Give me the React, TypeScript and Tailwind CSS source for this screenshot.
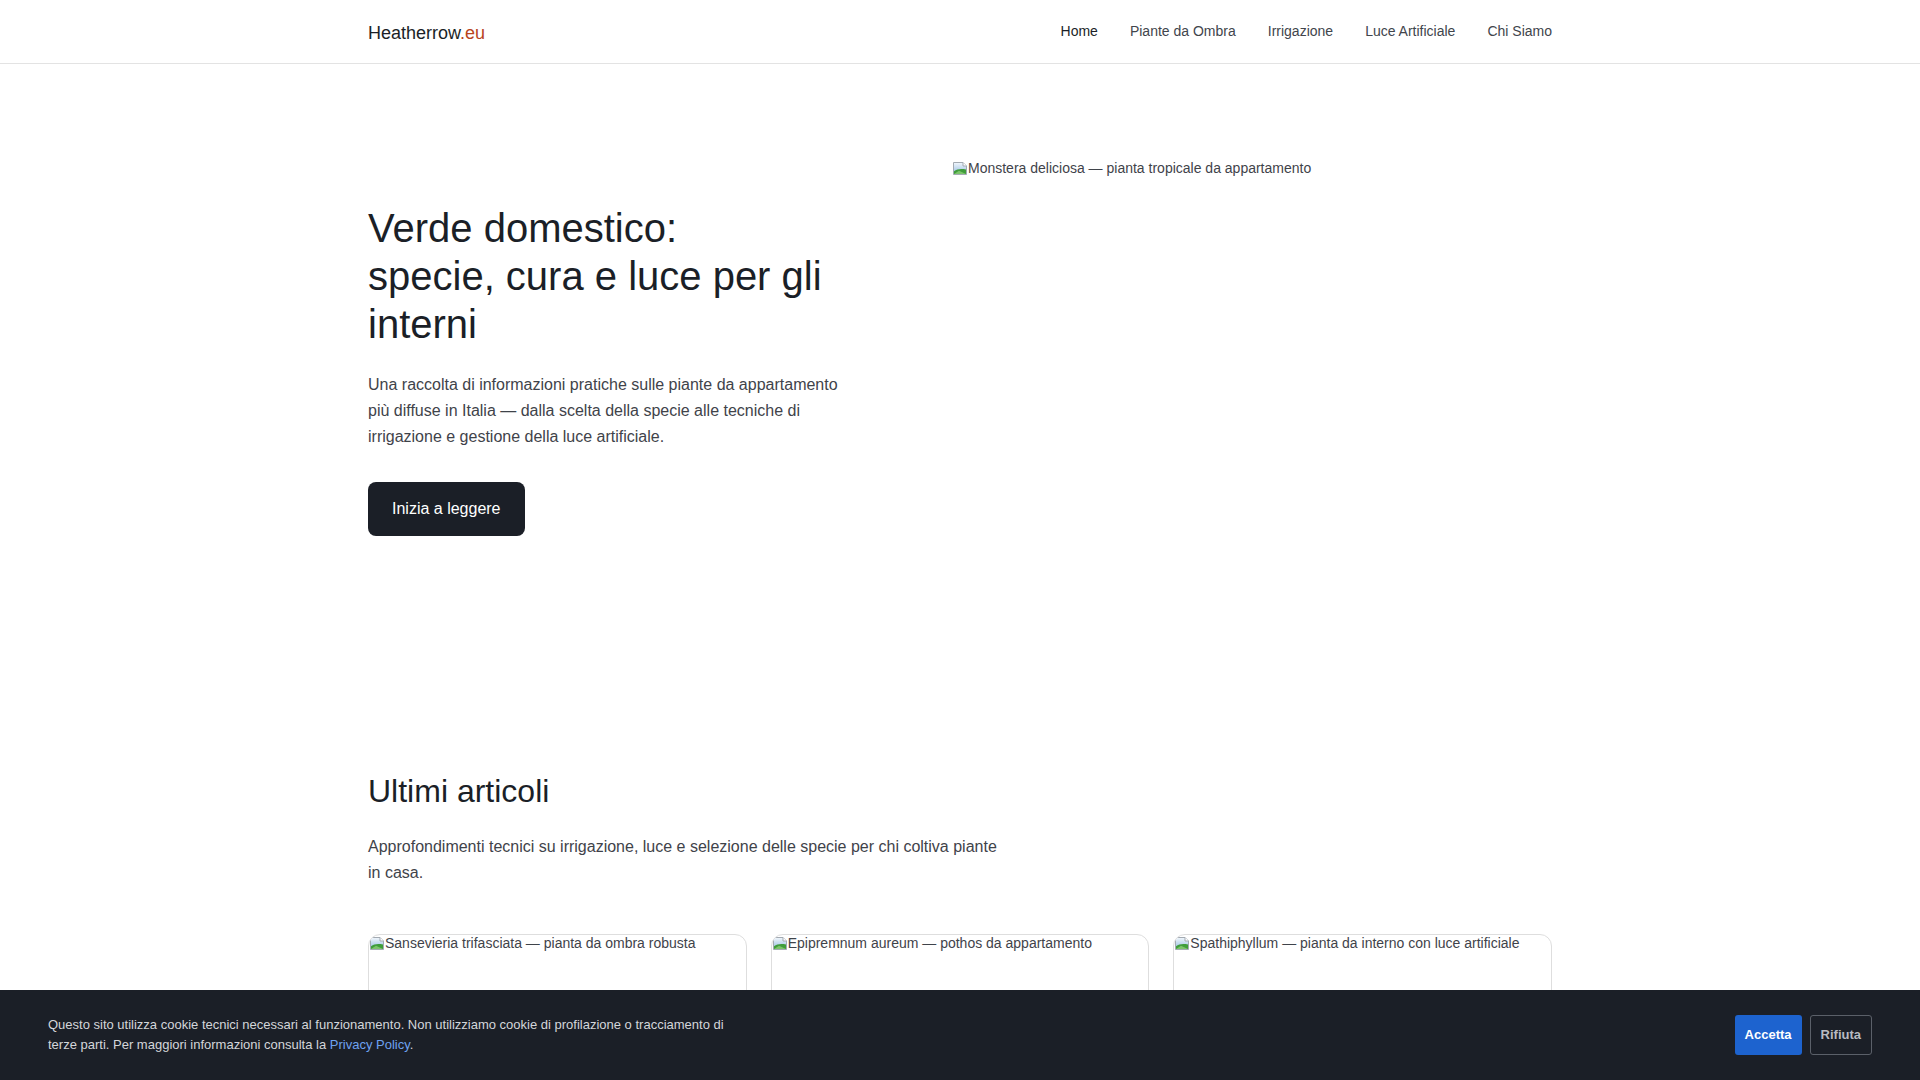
import React from "react";

// Small "missing picture" glyph shown in front of each image caption
function PictureGlyph() {
  return (
    <svg width="16" height="16" viewBox="0 0 16 16" className="shrink-0">
      <defs>
        <linearGradient id="sky" x1="0" y1="0" x2="0" y2="1">
          <stop offset="0" stopColor="#f2f7fc" />
          <stop offset="1" stopColor="#8fb9df" />
        </linearGradient>
      </defs>
      <path d="M1.5 2.5h9.5l3.5 3.5v8.5h-13z" fill="url(#sky)" stroke="#a3aab2" strokeWidth="1" />
      <path d="M2 14V11.2C5 9.2 9 8.6 14 9.6V14z" fill="#3f9d3a" />
      <path d="M2 14l5-3.2L14 14z" fill="#7cc46a" />
      <path d="M11 2.5v3.5h3.5" fill="#ffffff" stroke="#a3aab2" strokeWidth="1" />
    </svg>
  );
}

function ImageSlot({ label, className }: { label: string; className: string }) {
  return (
    <div className={className} role="img" aria-label={label}>
      <div className="flex items-start text-[14px] leading-[17px] text-[#3f434a]">
        <PictureGlyph />
        <span>{label}</span>
      </div>
    </div>
  );
}

const navItems = ["Home", "Piante da Ombra", "Irrigazione", "Luce Artificiale", "Chi Siamo"];

const articles = [
  {
    img: "Sansevieria trifasciata — pianta da ombra robusta",
    tag: "Piante da Ombra",
    title: "Sansevieria: la pianta che sopporta la penombra",
    text: "Esigenze di luce, substrato e frequenza di annaffiatura per una delle specie più resistenti.",
  },
  {
    img: "Epipremnum aureum — pothos da appartamento",
    tag: "Irrigazione",
    title: "Pothos: quanto e quando annaffiare",
    text: "Come leggere il terriccio e le foglie per evitare ristagni e marciumi radicali.",
  },
  {
    img: "Spathiphyllum — pianta da interno con luce artificiale",
    tag: "Luce Artificiale",
    title: "Spathiphyllum sotto lampade LED",
    text: "Spettro, intensità e ore di illuminazione per una fioritura regolare in casa.",
  },
];

export default function App() {
  return (
    <div className="min-h-screen bg-white font-['Liberation_Sans',Arial,sans-serif] text-[#1b1f27]">
      <header className="border-b border-[#e3e3e3]">
        <div className="mx-auto flex h-[63px] w-[1184px] items-center justify-between">
          <a className="pt-[2px] text-[18px] leading-none text-[#1b1f27]">
            Heatherrow<span className="text-[#b8441c]">.eu</span>
          </a>
          <nav className="flex items-center gap-8 text-[14px]">
            {navItems.map((item, i) => (
              <a key={item} className={i === 0 ? "text-[#1b1f27]" : "text-[#41454c]"}>
                {item}
              </a>
            ))}
          </nav>
        </div>
      </header>

      <main>
        <section className="py-24">
          <div className="mx-auto grid w-[1184px] grid-cols-[520px_600px] items-center gap-x-16">
            <div>
              <h1 className="mb-6 text-[40px] font-normal leading-[48px] text-[#1b1f27]">
                Verde domestico:
                <br />
                specie, cura e luce per gli interni
              </h1>
              <p className="mb-8 max-w-[480px] text-[16px] leading-[26px] text-[#3f434a]">
                Una raccolta di informazioni pratiche sulle piante da appartamento più diffuse in Italia — dalla
                scelta della specie alle tecniche di irrigazione e gestione della luce artificiale.
              </p>
              <a className="inline-flex h-[54px] items-center rounded-lg bg-[#1b1f27] px-6 text-[16px] text-white">
                Inizia a leggere
              </a>
            </div>
            <ImageSlot
              label="Monstera deliciosa — pianta tropicale da appartamento"
              className="h-[420px] w-full"
            />
          </div>
        </section>

        <section className="pb-24 pt-24">
          <div className="mx-auto w-[1184px]">
            <h2 className="mb-6 text-[32px] font-normal leading-[38px] text-[#1b1f27]">Ultimi articoli</h2>
            <p className="mb-12 max-w-[640px] text-[16px] leading-[26px] text-[#3f434a]">
              Approfondimenti tecnici su irrigazione, luce e selezione delle specie per chi coltiva piante in casa.
            </p>
            <div className="grid grid-cols-3 gap-6">
              {articles.map((a) => (
                <article key={a.img} className="overflow-hidden rounded-xl border border-[#dedede]">
                  <ImageSlot label={a.img} className="h-[220px] w-full" />
                  <div className="p-6">
                    <div className="mb-2 text-[12px] uppercase tracking-wide text-[#b8441c]">{a.tag}</div>
                    <h3 className="mb-2 text-[20px] leading-[26px] text-[#1b1f27]">{a.title}</h3>
                    <p className="text-[15px] leading-[24px] text-[#3f434a]">{a.text}</p>
                  </div>
                </article>
              ))}
            </div>
          </div>
        </section>
      </main>

      <div className="fixed inset-x-0 bottom-0 flex items-center justify-between bg-[#1b1f27] px-12 py-[25px]">
        <p className="max-w-[690px] text-[13px] leading-[20px] text-[#d4d6da]">
          Questo sito utilizza cookie tecnici necessari al funzionamento. Non utilizziamo cookie di profilazione o
          tracciamento di terze parti. Per maggiori informazioni consulta la{" "}
          <a className="text-[#6ea2f0]">Privacy Policy</a>.
        </p>
        <div className="flex items-center gap-2">
          <button className="h-[40px] rounded-[3px] bg-[#1d63cf] px-[10px] text-[13px] font-bold text-white">
            Accetta
          </button>
          <button className="h-[40px] rounded-[3px] border border-[#5b6069] px-[10px] text-[13px] font-bold text-[#b8bbc1]">
            Rifiuta
          </button>
        </div>
      </div>
    </div>
  );
}
